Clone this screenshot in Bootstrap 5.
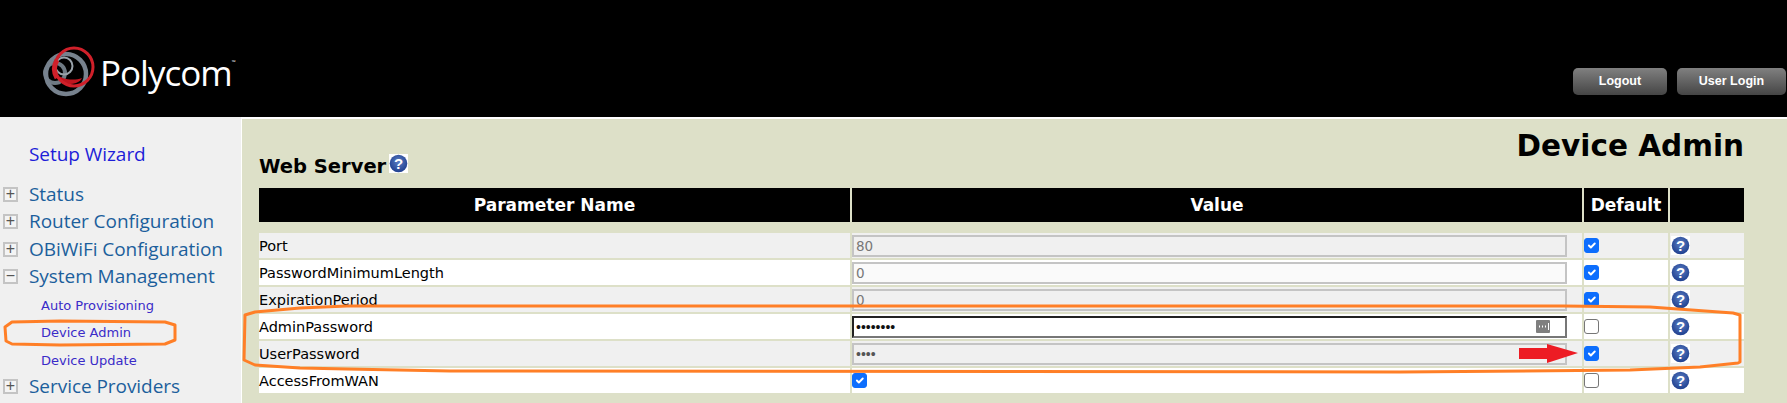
<!DOCTYPE html>
<html lang="en">
<head>
  <meta charset="UTF-8" />
  <title>Device Admin</title>
  <link href="https://cdn.jsdelivr.net/npm/bootstrap@5.3.2/dist/css/bootstrap.min.css" rel="stylesheet">
  <style>
    html, body { height: 403px; overflow: hidden; }
    body { position: relative; background: #fff; font-family: "DejaVu Sans", sans-serif; color: #000; }
    .top-bar { height: 117px; background: #000; padding: 68px 1px 0 41px; }
    .logo-text { font-family: "Open Sans", sans-serif; color: #fff; font-size: 35px; line-height: 38px; letter-spacing: -1px; margin: -14px 0 0 3px; }
    .logo-text sup { font-size: 5px; top: -22px; letter-spacing: 0; }
    .top-btn { height: 27px; padding: 0; border: 0; border-radius: 5px; color: #fff; font: bold 12.5px/27px "Liberation Sans", sans-serif; background: linear-gradient(#808080, #454545); }
    .top-btn:hover { color: #fff; background: linear-gradient(#808080, #454545); }
    .btn-logout { width: 94px; margin-right: 10px; }
    .btn-login { width: 109px; }
    .page-body { height: 286px; }
    .side-menu { width: 241px; flex: none; background: #f0f0f0; padding-top: 24px; }
    .side-item { height: 27.5px; font-family: "Open Sans", sans-serif; font-size: 19px; line-height: 27.5px; letter-spacing: -.05px; white-space: nowrap; }
    .side-item a { color: #1c5f9c; text-decoration: none; }
    .side-wizard { margin-bottom: 12px; padding-left: 29px; }
    .side-wizard a { color: #1d1dd8; }
    .side-sub { padding: 1px 0 0 41px; font-family: "DejaVu Sans", sans-serif; font-size: 13px; letter-spacing: 0; }
    .side-sub a { color: #3a2bc8; }
    .tree-box { width: 15px; height: 15px; margin: 0 11px 0 3px; flex: none; border: 2px solid #c4c4c4; background: #f4f4f4; color: #555; font: 16px/10px "Liberation Sans", sans-serif; text-align: center; }
    .main-area { flex: 1; margin: 2px 0 0 1px; background: #dde0c8; padding: 7px 0 0 15px; }
    .title-row { width: 1487px; height: 52px; padding-left: 2px; }
    .title-web { font-size: 19.5px; font-weight: 700; line-height: 24px; margin: 0 0 -1px; white-space: nowrap; }
    .title-page { font-size: 29.5px; font-weight: 700; line-height: 36px; margin: 2px 0 0; }
    .param-table { width: 1489px; table-layout: fixed; border-collapse: separate; border-spacing: 2px; margin-top: 8px; font-size: 14.5px; }
    .param-table th { height: 34px; padding: 2px 0 0; background: #000; color: #fff; font-size: 17px; text-align: center; }
    .param-table .gap-row td { height: 7px; padding: 0; background: transparent; }
    .param-table td { height: 25px; padding: 1px 0 0; background: #fff; vertical-align: middle; line-height: 1; white-space: nowrap; }
    .param-table td.ctl { padding: 0; }
    .param-table tr.alt td { background: #f0f0f0; }
    .form-control.value-box { display: block; width: 715px; height: 22px; padding: 0 2px; border: 2px solid #c4c4c4; border-radius: 0; background: #fafafa; color: #777; font-size: 13.5px; line-height: 18px; }
    .form-control.value-box:disabled { background: #f0f0f0; opacity: 1; }
    .form-control.value-box.is-focused { border-color: #222 #777 #777 #222; background: #fff; color: #000; box-shadow: none; }
    .form-control.value-box[type=password] { font-family: "Liberation Sans", sans-serif; font-size: 14px; color: #555; }
    .form-control.value-box.is-focused[type=password] { color: #111; }
    .form-check-input.tick { display: block; width: 15px; height: 15px; margin: 0; border: 1px solid #767676; border-radius: 3px; opacity: 1; }
    .form-check-input.tick:checked { border-color: #0d6efd; }
    .value-wrap { position: relative; }
    .key-icon { position: absolute; left: 684px; top: 4px; width: 14px; height: 13px; border-radius: 1px; background: #7f7f7f; }
    .help-dot { display: block; width: 19px; height: 19px; margin-left: 1px; }
    .help-inline { display: inline-block; width: 21px; height: 19px; margin-left: 2px; vertical-align: 0; }
    .marks { position: absolute; left: 0; top: 0; width: 1787px; height: 403px; pointer-events: none; }
  </style>
</head>
<body>
  <svg width="0" height="0" class="position-absolute">
    <defs>
      <radialGradient id="ball" cx="50%" cy="40%" r="60%">
        <stop offset="0" stop-color="#5c7fc4"/>
        <stop offset="1" stop-color="#1f3f8f"/>
      </radialGradient>
      <symbol id="help" viewBox="0 0 19 19">
        <rect width="19" height="19" fill="#fff"/>
        <circle cx="9.5" cy="9.5" r="8.8" fill="url(#ball)"/>
        <text x="9.5" y="15" text-anchor="middle" fill="#fff" font-family="Liberation Sans" font-weight="700" font-size="15">?</text>
      </symbol>
    </defs>
  </svg>

  <div class="top-bar d-flex justify-content-between">
    <div class="d-flex align-items-start">
      <svg width="56" height="52" viewBox="0 0 56 52" style="margin-top:-22px">
        <g fill="none">
          <circle cx="14" cy="27" r="10" stroke="#6f7a84" stroke-width="4"/>
          <circle cx="25" cy="28" r="20" stroke="#77828e" stroke-width="4.5"/>
          <circle cx="23" cy="20" r="8.5" stroke="#9aa3ab" stroke-width="2"/>
          <path d="M13 27c2 8 12 13 22 10 3-1 5-3 6-5-8 3-20 2-28-5z" fill="#c0151f"/>
          <circle cx="33" cy="21" r="19" stroke="#d0202a" stroke-width="3"/>
          <path d="M16 14c-4 7-3 13 0 18" stroke="#d0202a" stroke-width="5"/>
        </g>
      </svg>
      <div class="logo-text">Polycom<sup>&trade;</sup></div>
    </div>
    <div class="d-flex align-items-start">
      <button type="button" class="btn top-btn btn-logout">Logout</button>
      <button type="button" class="btn top-btn btn-login">User Login</button>
    </div>
  </div>

  <div class="page-body d-flex">
    <nav class="side-menu">
      <div class="side-item side-wizard"><a href="#">Setup Wizard</a></div>
      <div class="side-item d-flex align-items-center"><span class="tree-box">+</span><a href="#">Status</a></div>
      <div class="side-item d-flex align-items-center"><span class="tree-box">+</span><a href="#">Router Configuration</a></div>
      <div class="side-item d-flex align-items-center"><span class="tree-box">+</span><a href="#">OBiWiFi Configuration</a></div>
      <div class="side-item d-flex align-items-center"><span class="tree-box">&minus;</span><a href="#">System Management</a></div>
      <div class="side-item side-sub"><a href="#">Auto Provisioning</a></div>
      <div class="side-item side-sub"><a href="#">Device Admin</a></div>
      <div class="side-item side-sub"><a href="#">Device Update</a></div>
      <div class="side-item d-flex align-items-center"><span class="tree-box">+</span><a href="#">Service Providers</a></div>
    </nav>

    <main class="main-area">
      <div class="title-row d-flex justify-content-between">
        <h2 class="title-web align-self-end">Web Server<svg class="help-inline"><use href="#help"/></svg></h2>
        <h1 class="title-page">Device Admin</h1>
      </div>
      <table class="param-table">
        <colgroup><col style="width:591px"><col style="width:730px"><col style="width:84px"><col style="width:74px"></colgroup>
        <tr><th>Parameter Name</th><th>Value</th><th>Default</th><th></th></tr>
        <tr class="gap-row"><td colspan="4"></td></tr>
        <tr class="alt">
          <td>Port</td>
          <td class="ctl"><input class="form-control value-box" value="80" disabled></td>
          <td class="ctl"><input class="form-check-input tick" type="checkbox" checked></td>
          <td class="ctl"><svg class="help-dot"><use href="#help"/></svg></td>
        </tr>
        <tr>
          <td>PasswordMinimumLength</td>
          <td class="ctl"><input class="form-control value-box" value="0"></td>
          <td class="ctl"><input class="form-check-input tick" type="checkbox" checked></td>
          <td class="ctl"><svg class="help-dot"><use href="#help"/></svg></td>
        </tr>
        <tr class="alt">
          <td>ExpirationPeriod</td>
          <td class="ctl"><input class="form-control value-box" value="0" disabled></td>
          <td class="ctl"><input class="form-check-input tick" type="checkbox" checked></td>
          <td class="ctl"><svg class="help-dot"><use href="#help"/></svg></td>
        </tr>
        <tr>
          <td>AdminPassword</td>
          <td class="ctl"><div class="value-wrap">
            <input class="form-control value-box is-focused" type="password" value="12345678">
            <svg class="key-icon" viewBox="0 0 14 13"><path d="M3 6.5h1M6 6.5h1M9 6.5h1" stroke="#fff" stroke-width="2"/><path d="M12.5 3v7" stroke="#fff"/></svg>
          </div></td>
          <td class="ctl"><input class="form-check-input tick" type="checkbox"></td>
          <td class="ctl"><svg class="help-dot"><use href="#help"/></svg></td>
        </tr>
        <tr class="alt">
          <td>UserPassword</td>
          <td class="ctl"><input class="form-control value-box" type="password" value="1234" disabled></td>
          <td class="ctl"><input class="form-check-input tick" type="checkbox" checked></td>
          <td class="ctl"><svg class="help-dot"><use href="#help"/></svg></td>
        </tr>
        <tr>
          <td>AccessFromWAN</td>
          <td class="ctl"><input class="form-check-input tick" type="checkbox" checked></td>
          <td class="ctl"><input class="form-check-input tick" type="checkbox"></td>
          <td class="ctl"><svg class="help-dot"><use href="#help"/></svg></td>
        </tr>
      </table>
    </main>
  </div>

  <!-- hand drawn marks over the screenshot -->
  <svg class="marks" viewBox="0 0 1787 403">
    <g fill="none" stroke="#ff7f27" stroke-width="3" stroke-linejoin="round">
      <path d="M347 306L300 308L255 312L245 315L244 360L255 365L300 368L347 369L450 371L1400 372L1630 370L1700 367L1738 363L1740 362L1740 315L1733 313L1650 307L1563 306L1400 306L347 306Z"/>
      <path d="M12 322L60 321L165 322L175 325L175 340L165 344L60 345L12 344L6 341L5 327Z"/>
    </g>
    <path d="M1519 348H1547V344L1578 353L1547 363V359H1519Z" fill="#ed1c24"/>
  </svg>

  <script src="https://cdn.jsdelivr.net/npm/bootstrap@5.3.2/dist/js/bootstrap.bundle.min.js"></script>
</body>
</html>
